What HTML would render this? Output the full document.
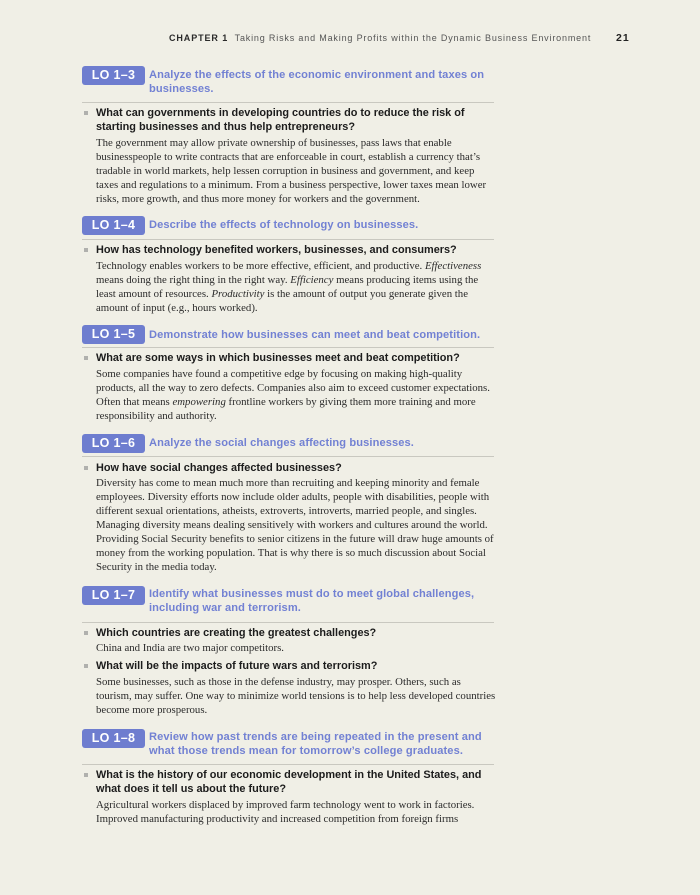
<!DOCTYPE html>
<html><head><meta charset="utf-8"><style>
*{margin:0;padding:0;box-sizing:border-box}
body{width:700px;height:895px;background:#f0efe6;position:relative;overflow:hidden}
.l{position:absolute;white-space:nowrap;height:14px;line-height:14px}
.hd{font-family:"Liberation Sans",sans-serif;font-size:9px;color:#555;letter-spacing:0.83px;top:31px;left:169px}
.hd b{color:#2a2a2a;letter-spacing:0.9px}
.pg{font-family:"Liberation Sans",sans-serif;font-size:10.5px;font-weight:bold;color:#222;top:31px;left:616px;letter-spacing:1px}
.badge{position:absolute;left:82px;width:63px;height:19px;background:#6e7dcf;border-radius:3px;color:#fff;font-family:"Liberation Sans",sans-serif;font-weight:bold;font-size:12.5px;line-height:19px;text-align:center;letter-spacing:0.3px}
.h{left:149px;font-family:"Liberation Sans",sans-serif;font-weight:bold;font-size:11.1px;color:#7281d3;letter-spacing:0.1px}
.rule{position:absolute;left:82px;width:412px;height:1px;background:#c9c8c0}
.q{left:96px;font-family:"Liberation Sans",sans-serif;font-weight:bold;font-size:10.9px;color:#1c1c1c}
.bul{position:absolute;left:84px;width:4px;height:4px;background:#b0b0ad}
.b{left:96px;font-family:"Liberation Serif",serif;font-size:10.8px;color:#2b2b2b}
</style></head><body>
<div class="l hd"><b>CHAPTER 1</b>&nbsp; Taking Risks and Making Profits within the Dynamic Business Environment</div>
<div class="l pg">21</div>

<div class="badge" style="top:66px">LO 1–3</div>
<div class="l h" style="top:68px">Analyze the effects of the economic environment and taxes on</div>
<div class="l h" style="top:82px">businesses.</div>
<div class="rule" style="top:102px"></div>
<div class="bul" style="top:111px"></div>
<div class="l q" style="top:106px">What can governments in developing countries do to reduce the risk of</div>
<div class="l q" style="top:120px">starting businesses and thus help entrepreneurs?</div>
<div class="l b" style="top:136px">The government may allow private ownership of businesses, pass laws that enable</div>
<div class="l b" style="top:150px">businesspeople to write contracts that are enforceable in court, establish a currency that’s</div>
<div class="l b" style="top:164px">tradable in world markets, help lessen corruption in business and government, and keep</div>
<div class="l b" style="top:178px">taxes and regulations to a minimum. From a business perspective, lower taxes mean lower</div>
<div class="l b" style="top:192px">risks, more growth, and thus more money for workers and the government.</div>

<div class="badge" style="top:216px">LO 1–4</div>
<div class="l h" style="top:218px">Describe the effects of technology on businesses.</div>
<div class="rule" style="top:239px"></div>
<div class="bul" style="top:248px"></div>
<div class="l q" style="top:243px">How has technology benefited workers, businesses, and consumers?</div>
<div class="l b" style="top:259px">Technology enables workers to be more effective, efficient, and productive. <i>Effectiveness</i></div>
<div class="l b" style="top:273px">means doing the right thing in the right way. <i>Efficiency</i> means producing items using the</div>
<div class="l b" style="top:287px">least amount of resources. <i>Productivity</i> is the amount of output you generate given the</div>
<div class="l b" style="top:301px">amount of input (e.g., hours worked).</div>

<div class="badge" style="top:325px">LO 1–5</div>
<div class="l h" style="top:328px">Demonstrate how businesses can meet and beat competition.</div>
<div class="rule" style="top:347px"></div>
<div class="bul" style="top:356px"></div>
<div class="l q" style="top:351px">What are some ways in which businesses meet and beat competition?</div>
<div class="l b" style="top:367px">Some companies have found a competitive edge by focusing on making high-quality</div>
<div class="l b" style="top:381px">products, all the way to zero defects. Companies also aim to exceed customer expectations.</div>
<div class="l b" style="top:395px">Often that means <i>empowering</i> frontline workers by giving them more training and more</div>
<div class="l b" style="top:409px">responsibility and authority.</div>

<div class="badge" style="top:434px">LO 1–6</div>
<div class="l h" style="top:436px">Analyze the social changes affecting businesses.</div>
<div class="rule" style="top:456px"></div>
<div class="bul" style="top:466px"></div>
<div class="l q" style="top:461px">How have social changes affected businesses?</div>
<div class="l b" style="top:476px">Diversity has come to mean much more than recruiting and keeping minority and female</div>
<div class="l b" style="top:490px">employees. Diversity efforts now include older adults, people with disabilities, people with</div>
<div class="l b" style="top:504px">different sexual orientations, atheists, extroverts, introverts, married people, and singles.</div>
<div class="l b" style="top:518px">Managing diversity means dealing sensitively with workers and cultures around the world.</div>
<div class="l b" style="top:532px">Providing Social Security benefits to senior citizens in the future will draw huge amounts of</div>
<div class="l b" style="top:546px">money from the working population. That is why there is so much discussion about Social</div>
<div class="l b" style="top:560px">Security in the media today.</div>

<div class="badge" style="top:586px">LO 1–7</div>
<div class="l h" style="top:587px">Identify what businesses must do to meet global challenges,</div>
<div class="l h" style="top:601px">including war and terrorism.</div>
<div class="rule" style="top:622px"></div>
<div class="bul" style="top:631px"></div>
<div class="l q" style="top:626px">Which countries are creating the greatest challenges?</div>
<div class="l b" style="top:641px">China and India are two major competitors.</div>
<div class="bul" style="top:664px"></div>
<div class="l q" style="top:659px">What will be the impacts of future wars and terrorism?</div>
<div class="l b" style="top:675px">Some businesses, such as those in the defense industry, may prosper. Others, such as</div>
<div class="l b" style="top:689px">tourism, may suffer. One way to minimize world tensions is to help less developed countries</div>
<div class="l b" style="top:703px">become more prosperous.</div>

<div class="badge" style="top:729px">LO 1–8</div>
<div class="l h" style="top:730px">Review how past trends are being repeated in the present and</div>
<div class="l h" style="top:744px">what those trends mean for tomorrow’s college graduates.</div>
<div class="rule" style="top:764px"></div>
<div class="bul" style="top:773px"></div>
<div class="l q" style="top:768px">What is the history of our economic development in the United States, and</div>
<div class="l q" style="top:782px">what does it tell us about the future?</div>
<div class="l b" style="top:798px">Agricultural workers displaced by improved farm technology went to work in factories.</div>
<div class="l b" style="top:812px">Improved manufacturing productivity and increased competition from foreign firms</div>
</body></html>
